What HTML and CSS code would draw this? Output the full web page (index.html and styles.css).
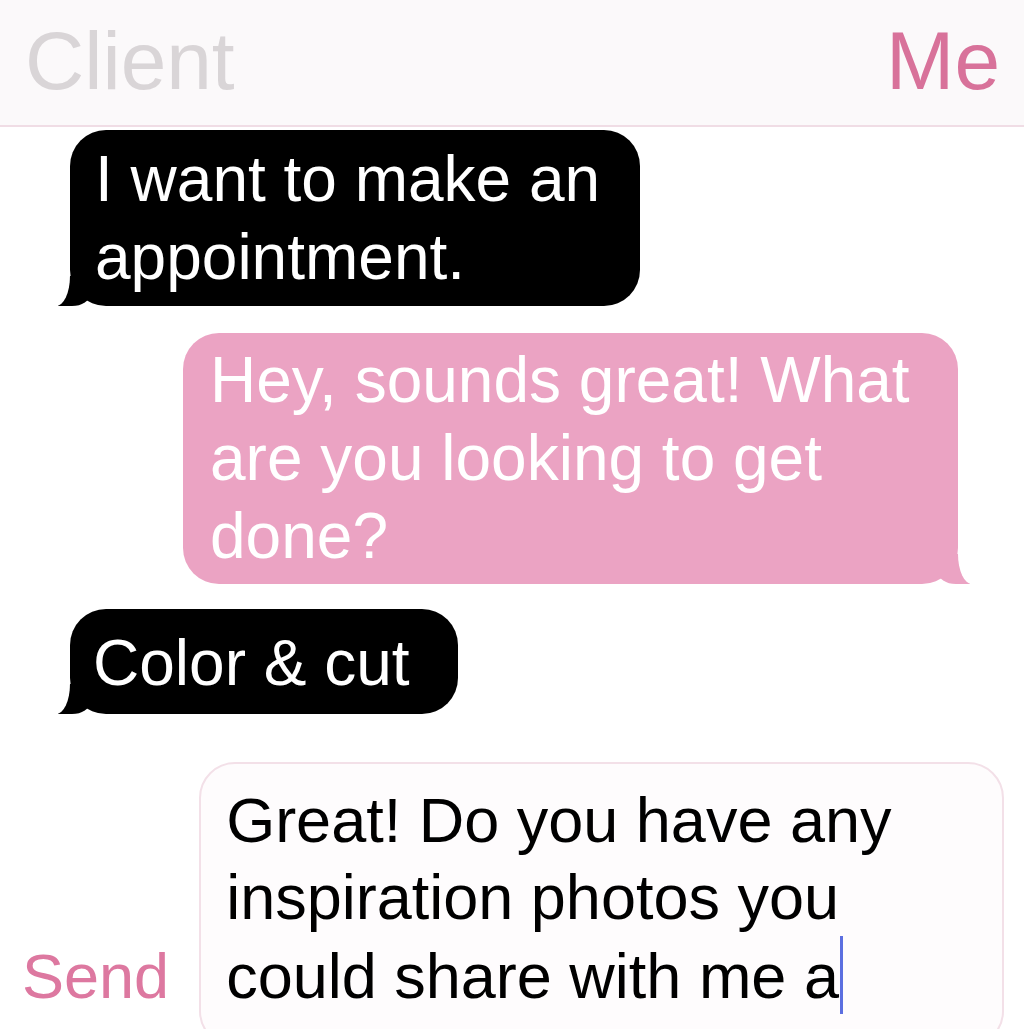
FILE: index.html
```
<!DOCTYPE html>
<html lang="en">
<head>
  <meta charset="UTF-8" />
  <meta name="viewport" content="width=device-width, initial-scale=1.0"/>
  <title>Client chat</title>
  <link rel="stylesheet" href="styles.css">
</head>
<body>
  <header class="topbar">
    <span class="who client">Client</span>
    <span class="who me">Me</span>
  </header>

  <main class="thread">
    <div class="bubble them first">I want to make an appointment.</div>
    <div class="bubble mine">Hey, sounds great! What are you looking to get done?</div>
    <div class="bubble them short">Color &amp; cut</div>
  </main>

  <div class="composer">
    <button class="send">Send</button>
    <div class="draft">Great! Do you have any inspiration photos you could share with me a<span class="caret"></span></div>
  </div>
</body>
</html>
```

FILE: styles.css
```
body {
  margin: 0;
  padding: 0;
  background: #ffffff;
  font-family: 'Liberation Sans', Arial, sans-serif;
  overflow: hidden;
  height: 1029px;
}

.topbar {
  display: flex;
  justify-content: space-between;
  align-items: baseline;
  padding: 14px 24px 17px 25px;
  background: #fbf9fa;
  border-bottom: 2px solid #f0dde5;
}

.who {
  font-size: 82px;
  line-height: 94px;
}

.client {
  color: #d9d5d7;
}

.me {
  color: #d8729a;
}

.thread {
  display: flex;
  flex-direction: column;
  padding-top: 3px;
}

.bubble {
  position: relative;
  font-size: 64px;
  line-height: 78px;
  border-radius: 36px;
}

/* incoming: black, tail bottom left */
.them {
  align-self: flex-start;
  margin-left: 70px;
  background: #000;
  color: #fff;
}

.them::before {
  content: '';
  position: absolute;
  left: -12px;
  bottom: 0;
  width: 32px;
  height: 30px;
  background: #000;
  border-bottom-right-radius: 18px 12px;
}

.them::after {
  content: '';
  position: absolute;
  left: -26px;
  bottom: 0;
  width: 26px;
  height: 34px;
  background: #fff;
  border-bottom-right-radius: 14px 30px;
}

.first {
  max-width: 570px;
  box-sizing: border-box;
  padding: 10px 30px 10px 25px;
}

.short {
  margin-top: 25px;
  padding: 15px 48px 12px 23px;
}

/* outgoing: pink, tail bottom right */
.mine {
  align-self: flex-end;
  margin: 27px 66px 0 0;
  width: 775px;
  box-sizing: border-box;
  padding: 8px 34px 9px 27px;
  background: #eba3c3;
  color: #fff;
}

.mine::before {
  content: '';
  position: absolute;
  right: -12px;
  bottom: 0;
  width: 32px;
  height: 30px;
  background: #eba3c3;
  border-bottom-left-radius: 18px 12px;
}

.mine::after {
  content: '';
  position: absolute;
  right: -26px;
  bottom: 0;
  width: 26px;
  height: 34px;
  background: #fff;
  border-bottom-left-radius: 14px 30px;
}

.composer {
  display: flex;
  align-items: last baseline;
  gap: 30px;
  margin-top: 48px;
  padding: 0 20px 0 22px;
}

.send {
  background: none;
  border: none;
  padding: 0;
  font-family: inherit;
  font-size: 63px;
  line-height: 78px;
  color: #dd78a0;
  cursor: pointer;
}

.draft {
  flex: 1;
  padding: 18px 40px 30px 25px;
  font-size: 63px;
  line-height: 77px;
  color: #000;
  background: #fefcfd;
  border: 2px solid #f3e0e8;
  border-radius: 36px;
}

.caret {
  display: inline-block;
  width: 3px;
  height: 78px;
  margin-left: 1px;
  vertical-align: -16px;
  background: #5c6fe0;
}
```
